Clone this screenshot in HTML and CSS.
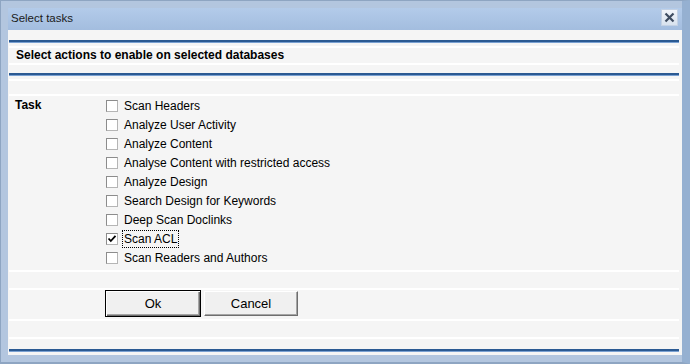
FILE: index.html
```html
<!DOCTYPE html>
<html lang="en">
<head>
    <meta charset="UTF-8">
    <title>Select tasks</title>
    <link rel="stylesheet" href="styles.css">
</head>
<body>
    <div class="window">
        <div class="titlebar">
            <span class="title">Select tasks</span>
            <button class="close-btn" title="Close">
                <svg width="11" height="11" viewBox="0 0 11 11">
                    <path d="M1.5 1.5 L9.5 9.5 M9.5 1.5 L1.5 9.5" stroke="#3e4c60" stroke-width="2.2" fill="none"/>
                </svg>
            </button>
        </div>

        <div class="content">
            <div class="rule"></div>
            <div class="row head">Select actions to enable on selected databases</div>
            <div class="rule second"></div>
            <div class="row empty top"></div>

            <div class="row tasks">
                <div class="label-col">Task</div>
                <div class="task-list">
                    <label class="task"><span class="box"></span><span class="text">Scan Headers</span></label>
                    <label class="task"><span class="box"></span><span class="text">Analyze User Activity</span></label>
                    <label class="task"><span class="box"></span><span class="text">Analyze Content</span></label>
                    <label class="task"><span class="box"></span><span class="text">Analyse Content with restricted access</span></label>
                    <label class="task"><span class="box"></span><span class="text">Analyze Design</span></label>
                    <label class="task"><span class="box"></span><span class="text">Search Design for Keywords</span></label>
                    <label class="task"><span class="box"></span><span class="text">Deep Scan Doclinks</span></label>
                    <label class="task">
                        <span class="box checked">
                            <svg width="10" height="10" viewBox="0 0 10 10">
                                <path d="M1.5 4.5 L3.8 7 L8.5 1.8" stroke="#000" stroke-width="1.8" fill="none"/>
                            </svg>
                        </span>
                        <span class="text focused">Scan ACL</span>
                    </label>
                    <label class="task"><span class="box"></span><span class="text">Scan Readers and Authors</span></label>
                </div>
            </div>

            <div class="row empty"></div>
            <div class="row buttons">
                <button class="btn default">Ok</button>
                <button class="btn">Cancel</button>
            </div>
            <div class="row empty"></div>
            <div class="rule bottom"></div>
        </div>
    </div>
</body>
</html>
```

FILE: styles.css
```css
body {
    margin: 0;
    font-family: "Liberation Sans", Arial, sans-serif;
    font-size: 12px;
    color: #000;
}
.window {
    width: 690px;
    height: 364px;
    box-sizing: border-box;
    background: #b3c6df;
    border-top: 1px solid #8ea5c2;
    border-left: 1px solid #8ea5c2;
    border-bottom: 2px solid #8ea5c2;
    border-right: 8px solid #95b0d1;
    padding: 7px 0 7px 7px;
    display: flex;
    flex-direction: column;
}
.titlebar {
    height: 22px;
    flex: none;
    background: linear-gradient(#b3cbea, #a3bddf);
    display: flex;
    align-items: flex-start;
    justify-content: space-between;
}
.title {
    padding: 4px 0 0 3px;
    font-size: 11.5px;
    color: #1a1a1a;
}
.close-btn {
    width: 17px;
    height: 17px;
    margin: 1px 4px 0 0;
    padding: 0;
    border: 1px solid #c3d1e4;
    background: linear-gradient(#f2f5fa, #d8e2ee);
    display: flex;
    align-items: center;
    justify-content: center;
}
.content {
    flex: 1;
    background: #f5f5f5;
    padding: 10px 3px 0 1px;
    display: flex;
    flex-direction: column;
}
.rule {
    height: 0;
    border-top: 2px solid #2b5a93;
    border-bottom: 1px solid #7aa1d2;
}
.rule.second {
    margin-top: 8px;
}
.rule.bottom {
    margin-top: 10px;
}
.row {
    border-bottom: 2px solid #fff;
}
.head {
    margin-top: 3px;
    border-top: 2px solid #fff;
    height: 15px;
    line-height: 15px;
    padding-left: 7px;
    font-weight: bold;
}
.empty {
    height: 16px;
}
.empty.top {
    margin-top: 3px;
    border-top: 2px solid #fff;
    height: 13px;
}
.tasks {
    display: flex;
    padding-bottom: 3px;
}
.label-col {
    width: 91px;
    padding: 2px 0 0 6px;
    font-weight: bold;
    line-height: 15px;
}
.task-list {
    display: flex;
    flex-direction: column;
}
.task {
    height: 19px;
    display: flex;
    align-items: center;
}
.box {
    width: 12px;
    height: 12px;
    box-sizing: border-box;
    border: 1px solid #8c8c8c;
    border-right-color: #b5b5b5;
    border-bottom-color: #b5b5b5;
    background: #fff;
    margin-right: 5px;
    display: flex;
    align-items: center;
    justify-content: center;
}
.text {
    padding: 1px;
    margin-left: -1px;
    border: 1px dotted transparent;
}
.text.focused {
    border-color: #000;
}
.buttons {
    height: 29px;
    padding-left: 96px;
    display: flex;
    align-items: flex-start;
    gap: 3px;
}
.btn {
    width: 94px;
    height: 25px;
    margin-top: 1px;
    font-family: "Liberation Sans", Arial, sans-serif;
    font-size: 13px;
    background: #f0f0f0;
    border: 1px solid;
    border-color: #fff #6e6e6e #6e6e6e #fff;
    box-shadow: inset -1px -1px 0 #a5a5a5;
    padding: 0;
}
.btn.default {
    width: 96px;
    height: 27px;
    margin-top: 0;
    outline: none;
    border: 1px solid #000;
    box-shadow: inset 1px 1px 0 #fff, inset -1px -1px 0 #6e6e6e, inset -2px -2px 0 #a5a5a5;
}
```
